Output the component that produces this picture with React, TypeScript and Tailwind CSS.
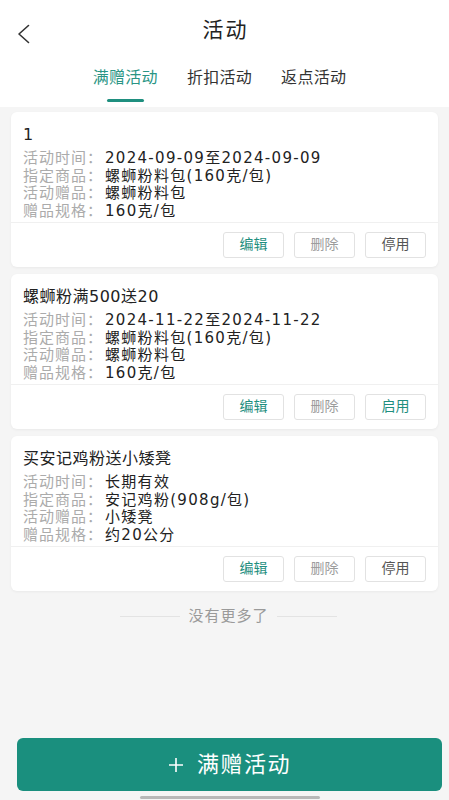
import React from "react";

type Activity = {
  title: string;
  time: string;
  goods: string;
  gift: string;
  spec: string;
  enabled: boolean;
};

const activities: Activity[] = [
  {
    title: "1",
    time: "2024-09-09至2024-09-09",
    goods: "螺蛳粉料包(160克/包)",
    gift: "螺蛳粉料包",
    spec: "160克/包",
    enabled: true,
  },
  {
    title: "螺蛳粉满500送20",
    time: "2024-11-22至2024-11-22",
    goods: "螺蛳粉料包(160克/包)",
    gift: "螺蛳粉料包",
    spec: "160克/包",
    enabled: false,
  },
  {
    title: "买安记鸡粉送小矮凳",
    time: "长期有效",
    goods: "安记鸡粉(908g/包)",
    gift: "小矮凳",
    spec: "约20公分",
    enabled: true,
  },
];

function Row({ label, value }: { label: string; value: string }) {
  return (
    <div className="flex h-[17.7px] items-center leading-[17.7px]">
      <span className="w-[82px] shrink-0 tracking-[1px] text-[#ababab]">{label}：</span>
      <span className="tracking-[1.3px] text-[#222]">{value}</span>
    </div>
  );
}

function ActivityCard({ item }: { item: Activity }) {
  const btn = "h-[26px] w-[61px] rounded-[3px] border border-[#e2e2e2] text-[14px]";
  return (
    <div className="h-[155px] rounded-md bg-white shadow-[0_1px_3px_rgba(0,0,0,0.05)]">
      <div className="px-[12px] pt-[12px]">
        <div className="h-[22px] text-[16px] leading-[22px] tracking-[0.5px] text-[#222]">{item.title}</div>
        <div className="mt-[4px] text-[15px]">
          <Row label="活动时间" value={item.time} />
          <Row label="指定商品" value={item.goods} />
          <Row label="活动赠品" value={item.gift} />
          <Row label="赠品规格" value={item.spec} />
        </div>
      </div>
      <div className="mt-[1px] h-px bg-[#f0f0f0]" />
      <div className="flex justify-end gap-[10px] px-[12px] pt-[9px]">
        <button className={btn + " text-[#1f8f7f]"}>编辑</button>
        <button className={btn + " text-[#9c9c9c]"}>删除</button>
        <button className={item.enabled ? btn + " text-[#555]" : btn + " text-[#1f8f7f]"}>
          {item.enabled ? "停用" : "启用"}
        </button>
      </div>
    </div>
  );
}

export default function App() {
  return (
    <div
      className="flex h-[800px] w-full flex-col bg-[#f5f5f5]"
      style={{ fontFamily: '"DejaVu Sans", "Noto Sans CJK SC", sans-serif' }}
    >
      <header className="bg-white">
        <div className="relative flex h-[62px] items-center justify-center">
          <svg
            className="absolute left-[16px] top-[24px]"
            width="15"
            height="20"
            viewBox="0 0 15 20"
            fill="none"
          >
            <path d="M12.5 1.5 L3 10 L12.5 18.5" stroke="#333" strokeWidth="1.6" strokeLinecap="round" strokeLinejoin="round" />
          </svg>
          <h1 className="pl-[2px] text-[21px] tracking-[2px] text-[#222]">活动</h1>
        </div>
        <nav className="flex h-[45px] justify-center gap-[29px] pr-[10px]">
          <div className="flex flex-col items-center">
            <span className="mt-[4px] text-[16px] leading-[24px] tracking-[0.3px] text-[#2a9584]">满赠活动</span>
            <span className="mt-[9px] h-[3px] w-[37px] rounded-full bg-[#1f8f7f]" />
          </div>
          <span className="mt-[4px] text-[16px] leading-[24px] tracking-[0.3px] text-[#333]">折扣活动</span>
          <span className="mt-[4px] text-[16px] leading-[24px] tracking-[0.3px] text-[#333]">返点活动</span>
        </nav>
      </header>

      <main className="flex flex-col gap-[7px] px-[11px] pt-[5px]">
        {activities.map((a) => (
          <ActivityCard key={a.title} item={a} />
        ))}
      </main>

      <div className="mt-[14px] flex items-center justify-center gap-[8px] pl-[8px]">
        <span className="h-px w-[60px] bg-[#e3e3e3]" />
        <span className="text-[15px] tracking-[1px] text-[#9a9a9a]">没有更多了</span>
        <span className="h-px w-[60px] bg-[#e3e3e3]" />
      </div>

      <div className="flex-1" />

      <button className="ml-[17px] mr-[7px] flex h-[53px] items-center justify-center gap-[13px] rounded-md bg-[#1a8f7e] text-white">
        <svg width="16" height="16" viewBox="0 0 16 16">
          <path d="M8 1 V15 M1 8 H15" stroke="white" strokeWidth="1.6" />
        </svg>
        <span className="text-[22px] tracking-[1.5px]">满赠活动</span>
      </button>
      <div className="flex h-[9px] items-end justify-center pl-[10px]">
        <span className="mb-[1px] h-[3px] w-[180px] rounded-full bg-[#b8b8b8]" />
      </div>
    </div>
  );
}
